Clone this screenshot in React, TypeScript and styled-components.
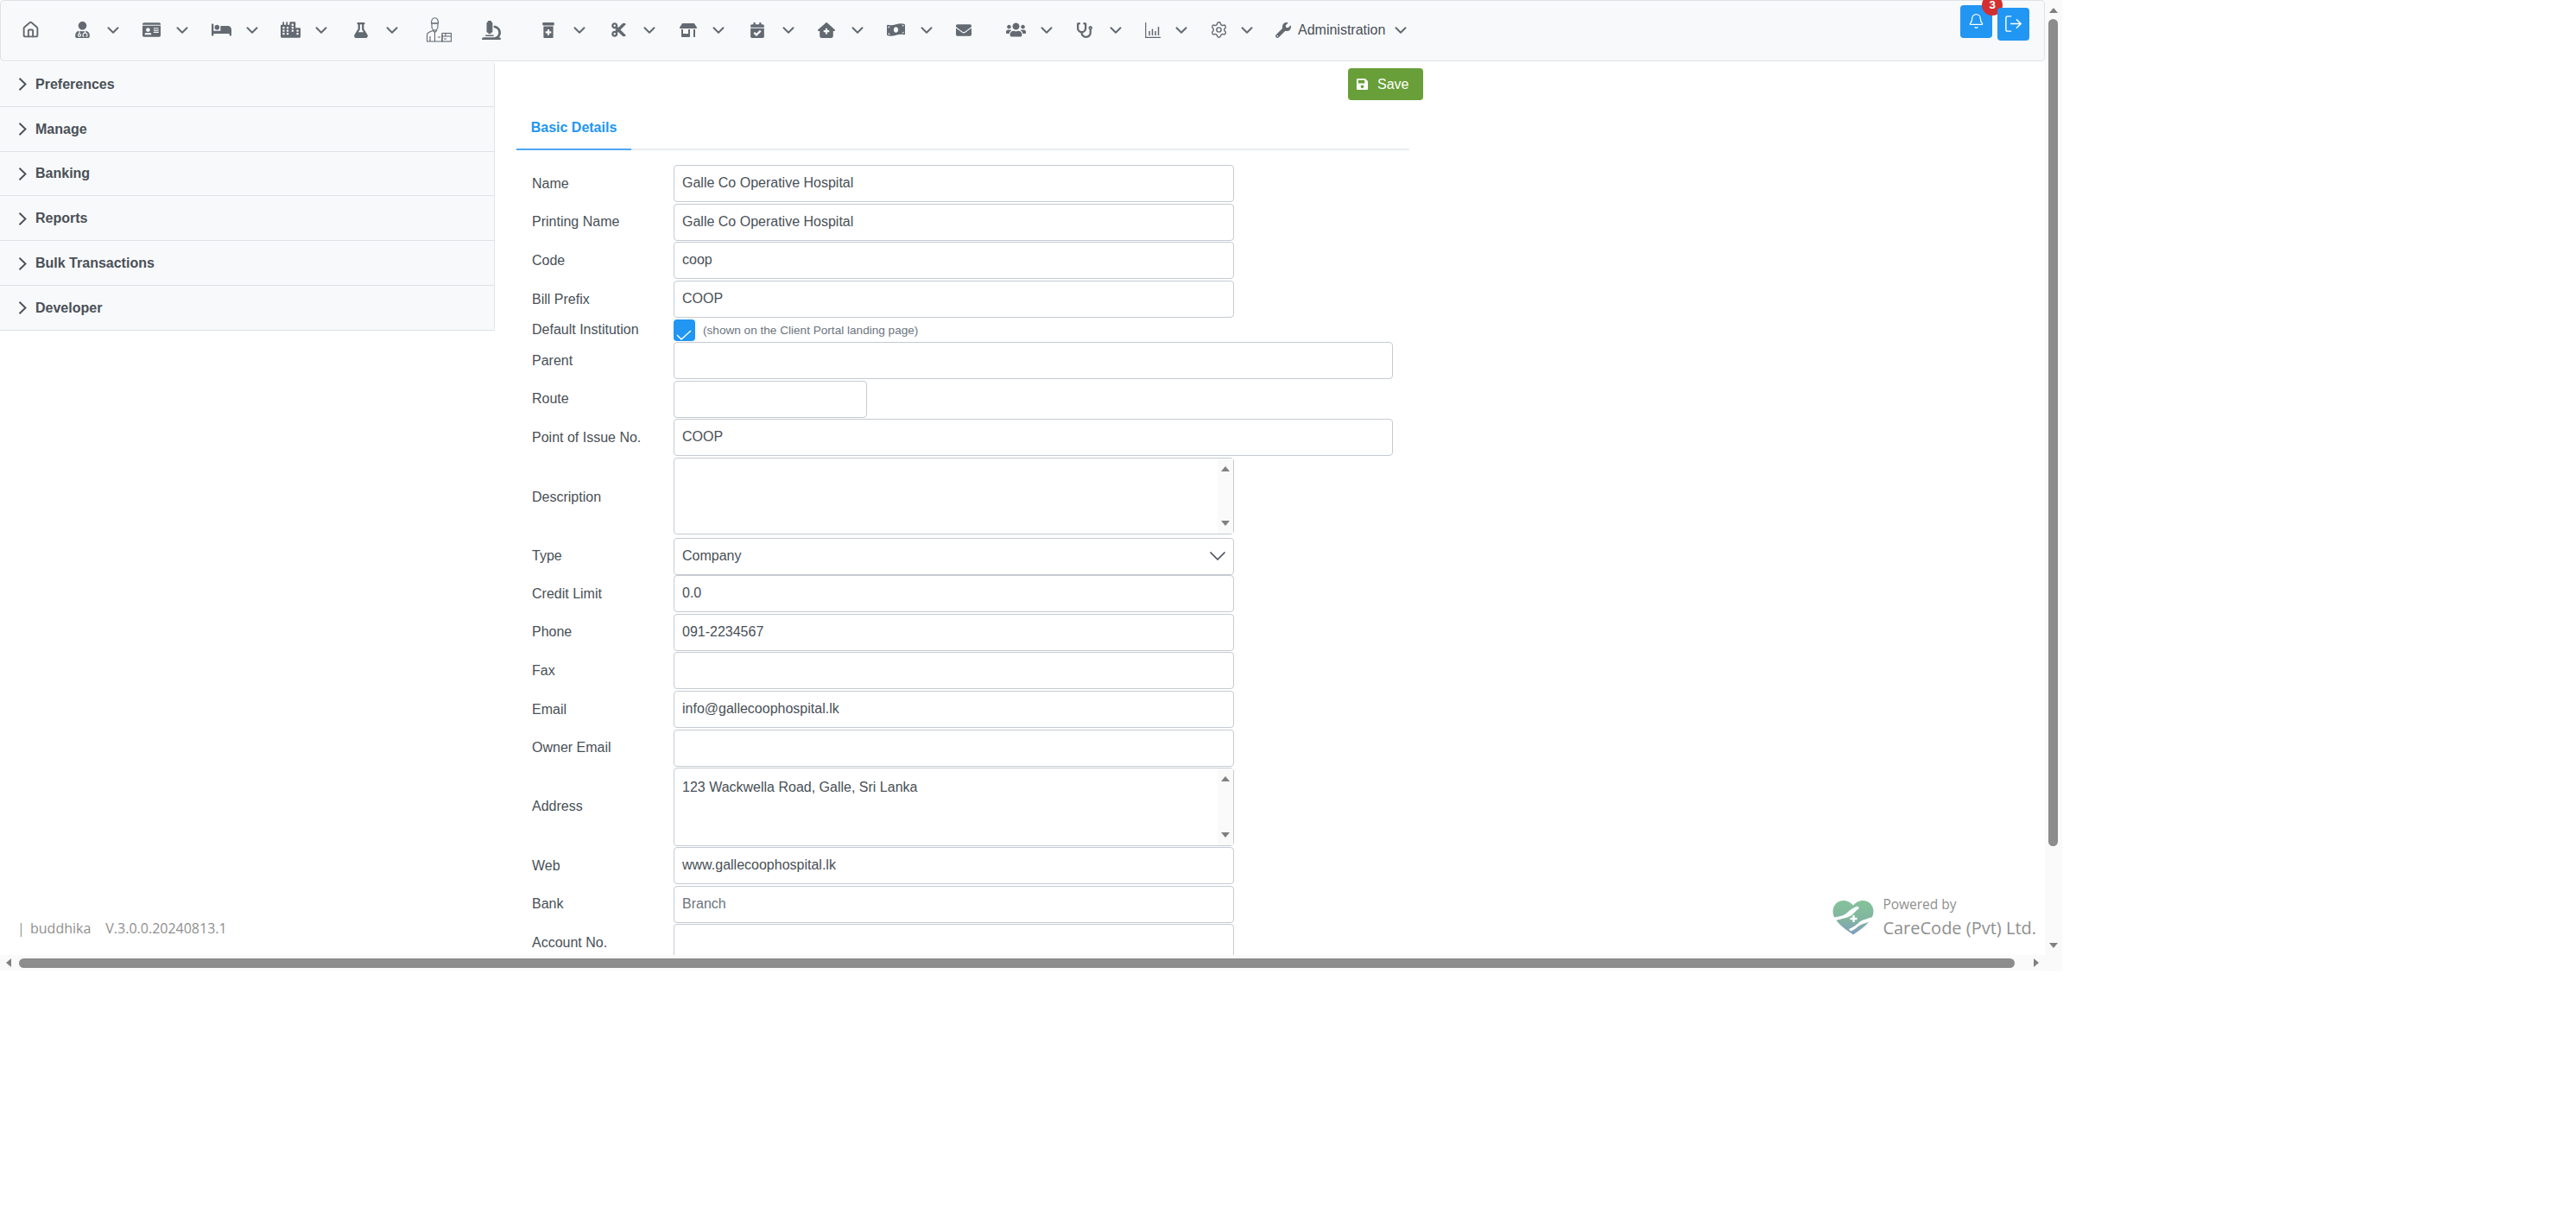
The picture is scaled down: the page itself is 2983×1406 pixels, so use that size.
import { FC, ReactNode } from "react";
import styled, { createGlobalStyle } from "styled-components";
import { ChevronDown, House, LogOut, Bell, Settings } from "lucide-react";
import {
  FaBed,
  FaCalendarCheck,
  FaCity,
  FaCut,
  FaEnvelope,
  FaFlask,
  FaIdCard,
  FaMicroscope,
  FaMoneyBillWave,
  FaPrescriptionBottleAlt,
  FaSave,
  FaStethoscope,
  FaStoreAlt,
  FaUserMd,
  FaUsers,
  FaWrench,
} from "react-icons/fa";
import { FaHouseMedical } from "react-icons/fa6";

const GlobalStyle = createGlobalStyle`
  html, body {
    margin: 0;
    padding: 0;
    background: #fff;
  }
  * {
    box-sizing: border-box;
  }
`;

const DeliveryIcon = () => (
  <svg width="29" height="29" viewBox="0 0 29 29" fill="none" stroke="#5f6770" strokeWidth="1.1">
    <path d="M5.5 7 C5.5 2.5 7 0.8 9.5 0.8 C12 0.8 13.5 2.5 13.5 7 Z" />
    <path d="M5 7 H14 M6 8 V10.5 C6 13 7.5 15 9.5 15 C11.5 15 13 13 13 10.5 V8" />
    <path d="M7 15 L9.5 17.5 L12 15 M9.5 17.5 V28" />
    <path d="M7 15.5 L2.5 17.5 C1 18.2 0.5 19.5 0.5 21 V28 H18 V20" />
    <path d="M4 22 V28 M13 23 H16" />
    <rect x="18" y="18.5" width="10.5" height="9.5" />
    <path d="M18 22 H28.5 M22 18.5 V22 M20 25 H23" />
  </svg>
);

const ChartIcon = () => (
  <svg width="18" height="18" viewBox="0 0 18 18" fill="none" stroke="#5f6770">
    <path d="M0.7 0 V17.3 H18" strokeWidth="1.2" />
    <path d="M5 15 V10 M8.5 15 V7.5 M12 15 V10 M15.5 15 V5" strokeWidth="1.5" />
  </svg>
);

const PanelChevron = () => (
  <svg width="10" height="15" viewBox="0 0 10 15" fill="none" stroke="#495057" strokeWidth="1.9">
    <path d="M1.5 0.8 L8.5 7.5 L1.5 14.2" />
  </svg>
);

const CheckMark = () => (
  <svg width="19" height="12" viewBox="0 0 19 12" fill="none" stroke="#fff" strokeWidth="1.4">
    <path d="M1 6 L6 11 L17 1" />
  </svg>
);

const CareCodeLogo = () => (
  <svg width="48" height="41" viewBox="0 0 48 41">
    <defs>
      <linearGradient id="heart" x1="0" y1="0" x2="0" y2="1">
        <stop offset="0" stopColor="#84c39a" />
        <stop offset="0.55" stopColor="#82b5a0" />
        <stop offset="1" stopColor="#7f9cc2" />
      </linearGradient>
    </defs>
    <path
      d="M24 40.5 C18 36 6 29 2 20 C-2.5 10 4 1 12.5 1 C18 1 21.5 3.5 24 6.5 C26.5 3.5 30 1 35.5 1 C44 1 50.5 10 46 20 C42 29 30 36 24 40.5 Z"
      fill="url(#heart)"
    />
    <path d="M1 21 C8 19 13 19 17 15 C20 12 24 9 29 7.5 L31 10 C27 12 26 15 22 18 C18 21 10 22 4 24 Z" fill="#fff" />
    <path d="M47 20 C40 22 35 23 31 26 C28 29 24 32 19 34 L21 36.5 C26 35 29 31 33 29 C37 27 42 26 45 25 Z" fill="#fff" />
    <path d="M24.5 18 V26 M20.5 22 H28.5" stroke="#fff" strokeWidth="2.4" />
  </svg>
);

interface MenuEntry {
  icon: ReactNode;
  width: number;
  chevron?: boolean;
  gap?: number;
}

const menuEntries: MenuEntry[] = [
  { icon: <House size={21} strokeWidth={2.2} />, width: 60.5 },
  { icon: <FaUserMd size={19} />, width: 80, chevron: true },
  { icon: <FaIdCard size={21} />, width: 81, chevron: true },
  { icon: <FaBed size={23} />, width: 80, chevron: true },
  { icon: <FaCity size={23} />, width: 81.5, chevron: true },
  { icon: <FaFlask size={18} />, width: 90.5, chevron: true },
  { icon: <DeliveryIcon />, width: 60.5 },
  { icon: <FaMicroscope size={22} />, width: 66 },
  { icon: <FaPrescriptionBottleAlt size={18} />, width: 81, chevron: true },
  { icon: <FaCut size={19} />, width: 80.5, chevron: true },
  { icon: <FaStoreAlt size={20} />, width: 80.5, chevron: true },
  { icon: <FaCalendarCheck size={18} />, width: 80, chevron: true },
  { icon: <FaHouseMedical size={20} />, width: 80.5, chevron: true },
  { icon: <FaMoneyBillWave size={21} />, width: 78.5, chevron: true },
  { icon: <FaEnvelope size={18} />, width: 60 },
  { icon: <FaUsers size={23} />, width: 80, chevron: true },
  { icon: <FaStethoscope size={18} />, width: 79, chevron: true },
  { icon: <ChartIcon />, width: 76, chevron: true, gap: 1.5 },
  { icon: <Settings size={21} strokeWidth={1.6} />, width: 86, chevron: true, gap: 1.5 },
];

const panels = ["Preferences", "Manage", "Banking", "Reports", "Bulk Transactions", "Developer"];

type FieldKind = "input" | "check" | "area" | "select";

interface Field {
  label: string;
  rowHeight: number;
  kind?: FieldKind;
  value?: string;
  placeholder?: string;
  size?: "full" | "wide" | "short";
  boxHeight?: number;
}

const fields: Field[] = [
  { label: "Name", rowHeight: 45, value: "Galle Co Operative Hospital" },
  { label: "Printing Name", rowHeight: 44, value: "Galle Co Operative Hospital" },
  { label: "Code", rowHeight: 45, value: "coop" },
  { label: "Bill Prefix", rowHeight: 45, value: "COOP" },
  { label: "Default Institution", rowHeight: 26, kind: "check" },
  { label: "Parent", rowHeight: 45, size: "wide" },
  { label: "Route", rowHeight: 44, size: "short" },
  { label: "Point of Issue No.", rowHeight: 45, size: "wide", value: "COOP" },
  { label: "Description", rowHeight: 93, kind: "area", boxHeight: 89 },
  { label: "Type", rowHeight: 43, kind: "select", value: "Company" },
  { label: "Credit Limit", rowHeight: 45, value: "0.0" },
  { label: "Phone", rowHeight: 44, value: "091-2234567" },
  { label: "Fax", rowHeight: 45 },
  { label: "Email", rowHeight: 45, value: "info@gallecoophospital.lk" },
  { label: "Owner Email", rowHeight: 44 },
  { label: "Address", rowHeight: 92, kind: "area", boxHeight: 91, value: "123 Wackwella Road, Galle, Sri Lanka" },
  { label: "Web", rowHeight: 45, value: "www.gallecoophospital.lk" },
  { label: "Bank", rowHeight: 44, placeholder: "Branch" },
  { label: "Account No.", rowHeight: 45 },
];

const renderControl = (field: Field) => {
  if (field.kind === "check") {
    return (
      <CheckWrap>
        <CheckBox>
          <CheckMark />
        </CheckBox>
        <Note>(shown on the Client Portal landing page)</Note>
      </CheckWrap>
    );
  }
  if (field.kind === "area") {
    return (
      <AreaWrap $height={field.boxHeight ?? 89}>
        <TextArea readOnly value={field.value ?? ""} />
        <AreaScroll>
          <ArrowUp $w={5} $h={6} />
          <ArrowDown $w={5} $h={6} />
        </AreaScroll>
      </AreaWrap>
    );
  }
  if (field.kind === "select") {
    return (
      <SelectBox>
        {field.value}
        <ChevronDown size={32} strokeWidth={1.3} color="#495057" />
      </SelectBox>
    );
  }
  return <TextInput readOnly $size={field.size ?? "full"} value={field.value ?? ""} placeholder={field.placeholder} />;
};

const App: FC = () => {
  return (
    <>
      <GlobalStyle />
      <Page>
        <Main>
          <Viewport>
            <MenuBar>
              {menuEntries.map((entry, idx) => (
                <MenuItem key={idx} $width={entry.width}>
                  <IconSlot>{entry.icon}</IconSlot>
                  {entry.chevron && (
                    <MenuChevron $gap={entry.gap ?? 4.5}>
                      <ChevronDown size={22} strokeWidth={2.2} />
                    </MenuChevron>
                  )}
                </MenuItem>
              ))}
              <AdminItem>
                <FaWrench size={18} />
                <AdminLabel>Administration</AdminLabel>
                <MenuChevron $gap={6.5}>
                  <ChevronDown size={22} strokeWidth={2.2} />
                </MenuChevron>
              </AdminItem>
              <TopActions>
                <BellButton>
                  <Bell size={19} strokeWidth={1.6} />
                  <Badge>3</Badge>
                </BellButton>
                <LogoutButton>
                  <LogOut size={23} strokeWidth={1.5} />
                </LogoutButton>
              </TopActions>
            </MenuBar>
            <Body>
              <Sidebar>
                {panels.map((panel) => (
                  <Panel key={panel}>
                    <PanelChevron />
                    {panel}
                  </Panel>
                ))}
              </Sidebar>
              <Content>
                <Toolbar>
                  <SaveButton>
                    <FaSave size={15} />
                    Save
                  </SaveButton>
                </Toolbar>
                <TabBar>
                  <Tab>Basic Details</Tab>
                </TabBar>
                <Form>
                  {fields.map((field) => (
                    <Row key={field.label} $height={field.rowHeight}>
                      <Label>{field.label}</Label>
                      {renderControl(field)}
                    </Row>
                  ))}
                </Form>
              </Content>
            </Body>
            <Footer>
              <UserInfo>
                <Pipe>|</Pipe>
                <span>buddhika</span>
                <Version>V.3.0.0.20240813.1</Version>
              </UserInfo>
              <Brand>
                <CareCodeLogo />
                <BrandText>
                  <PoweredBy>Powered by</PoweredBy>
                  <BrandName>CareCode (Pvt) Ltd.</BrandName>
                </BrandText>
              </Brand>
            </Footer>
          </Viewport>
          <HScroll>
            <ArrowLeft />
            <HThumb />
            <ArrowRight />
          </HScroll>
        </Main>
        <VScroll>
          <ArrowUp $w={5.5} $h={6} />
          <VThumb />
          <ArrowDown $w={5.5} $h={6} />
        </VScroll>
      </Page>
    </>
  );
};

const Page = styled.div`
  display: flex;
  width: 2388px;
  height: 1125px;
  font-family: "Liberation Sans", Arial, sans-serif;
  font-size: 16px;
  color: #495057;
`;

const Main = styled.div`
  display: flex;
  flex-direction: column;
  width: 2368px;
  height: 1124px;
`;

const Viewport = styled.div`
  position: relative;
  height: 1106px;
  overflow: hidden;
`;

const MenuBar = styled.nav`
  display: flex;
  align-items: flex-start;
  height: 71px;
  padding-left: 14px;
  background: #f8f9fa;
  border: 1.5px solid #dee2e6;
  border-radius: 4px;
  color: #636a72;
`;

const MenuItem = styled.div<{ $width: number }>`
  display: flex;
  align-items: center;
  flex: none;
  width: ${(props) => props.$width}px;
  height: 67px;
`;

const IconSlot = styled.div`
  display: flex;
  align-items: center;
  justify-content: center;
  flex: none;
  width: 40px;
  height: 30px;
`;

const MenuChevron = styled.span<{ $gap: number }>`
  display: flex;
  flex: none;
  margin-left: ${(props) => props.$gap}px;
  color: #636a72;
`;

const AdminItem = styled.div`
  display: flex;
  align-items: center;
  flex: none;
  height: 67px;
`;

const AdminLabel = styled.span`
  margin-left: 8px;
  color: #495057;
`;

const TopActions = styled.div`
  display: flex;
  align-items: flex-start;
  gap: 6px;
  margin-left: auto;
  margin-right: 17px;
`;

const BellButton = styled.button`
  position: relative;
  display: flex;
  align-items: center;
  justify-content: center;
  width: 37px;
  height: 38px;
  margin-top: 4.5px;
  padding: 0;
  border: none;
  border-radius: 4px;
  background: #2196f3;
  color: #fff;
`;

const LogoutButton = styled(BellButton)`
  margin-top: 7.5px;
`;

const Badge = styled.span`
  position: absolute;
  top: -12px;
  right: -12px;
  display: flex;
  align-items: flex-end;
  justify-content: center;
  width: 24px;
  height: 24px;
  padding-bottom: 6px;
  border-radius: 50%;
  background: #d32f2f;
  color: #fff;
  font-family: "Inter", sans-serif;
  font-size: 12px;
  font-weight: 700;
  line-height: 12px;
`;

const Body = styled.div`
  display: flex;
  align-items: flex-start;
`;

const Sidebar = styled.aside`
  flex: none;
  width: 573px;
  margin-top: 1px;
  background: #f8f9fa;
  border-right: 1.5px solid #e4e7ea;
  border-radius: 0 3px 0 0;
`;

const Panel = styled.div`
  display: flex;
  align-items: center;
  gap: 10px;
  height: 51.8px;
  padding: 1px 0 0 21px;
  border-bottom: 1.5px solid #dee2e6;
  font-weight: 700;
`;

const Content = styled.main`
  flex: none;
  width: 1075px;
  padding-top: 8px;
`;

const Toolbar = styled.div`
  display: flex;
  justify-content: flex-end;
`;

const SaveButton = styled.button`
  display: flex;
  align-items: center;
  gap: 10px;
  width: 87px;
  height: 37px;
  padding: 0 0 0 9px;
  border: none;
  border-radius: 4px;
  background: #689f38;
  color: #fff;
  font-family: inherit;
  font-size: 16px;
`;

const TabBar = styled.div`
  display: flex;
  height: 52px;
  margin: 6px 16px 0 25px;
  border-bottom: 2px solid #e9ecef;
`;

const Tab = styled.div`
  display: flex;
  align-items: center;
  justify-content: center;
  width: 133px;
  height: 52px;
  padding-top: 2px;
  border-bottom: 2px solid #4fa8f5;
  color: #2196f3;
  font-weight: 700;
`;

const Form = styled.div`
  margin-top: 17px;
  padding-left: 43px;
`;

const Row = styled.div<{ $height: number }>`
  display: flex;
  align-items: flex-start;
  height: ${(props) => props.$height}px;
`;

const Label = styled.label`
  flex: none;
  align-self: center;
  width: 164px;
  margin-top: -2px;
`;

const controlWidths = { full: 649, wide: 833, short: 224 };

const TextInput = styled.input<{ $size: "full" | "wide" | "short" }>`
  width: ${(props) => controlWidths[props.$size]}px;
  height: 43px;
  padding: 0 9px 1px;
  border: 1.5px solid #c5cbd2;
  border-radius: 4px;
  outline: none;
  color: #495057;
  font-family: inherit;
  font-size: 16px;

  &::placeholder {
    color: #6c757d;
    opacity: 1;
  }
`;

const SelectBox = styled.div`
  display: flex;
  align-items: center;
  justify-content: space-between;
  width: 649px;
  height: 43px;
  padding: 0 2px 1px 9px;
  border: 1.5px solid #c5cbd2;
  border-radius: 4px;
`;

const CheckWrap = styled.div`
  display: flex;
  align-items: center;
  gap: 9px;
`;

const CheckBox = styled.div`
  display: flex;
  align-items: flex-end;
  justify-content: center;
  width: 25px;
  height: 25px;
  padding-bottom: 1px;
  border-radius: 4px;
  background: #2196f3;
`;

const Note = styled.span`
  color: #6c757d;
  font-size: 13.6px;
`;

const AreaWrap = styled.div<{ $height: number }>`
  position: relative;
  width: 649px;
  height: ${(props) => props.$height}px;
`;

const TextArea = styled.textarea`
  display: block;
  width: 100%;
  height: 100%;
  padding: 12px 25px 0 9px;
  border: 1.5px solid #c5cbd2;
  border-radius: 4px;
  outline: none;
  resize: none;
  overflow: hidden;
  color: #495057;
  font-family: inherit;
  font-size: 16px;
  line-height: 19px;
`;

const AreaScroll = styled.div`
  position: absolute;
  top: 1px;
  right: 1px;
  bottom: 1px;
  display: flex;
  flex-direction: column;
  align-items: center;
  justify-content: space-between;
  width: 18px;
  padding: 9px 0;
  background: #fafafa;
`;

const ArrowUp = styled.span<{ $w: number; $h: number }>`
  flex: none;
  width: 0;
  height: 0;
  border-left: ${(props) => props.$w}px solid transparent;
  border-right: ${(props) => props.$w}px solid transparent;
  border-bottom: ${(props) => props.$h}px solid #808080;
`;

const ArrowDown = styled.span<{ $w: number; $h: number }>`
  flex: none;
  width: 0;
  height: 0;
  border-left: ${(props) => props.$w}px solid transparent;
  border-right: ${(props) => props.$w}px solid transparent;
  border-top: ${(props) => props.$h}px solid #808080;
`;

const Footer = styled.footer`
  position: absolute;
  left: 0;
  right: 0;
  bottom: 16px;
  display: flex;
  align-items: flex-end;
  justify-content: space-between;
  padding: 0 10px 0 20px;
  font-family: "Open Sans", sans-serif;
  color: #8f8f8f;
`;

const UserInfo = styled.div`
  display: flex;
  font-size: 16px;
  line-height: 20px;
  margin-bottom: 5px;
`;

const Pipe = styled.span`
  width: 15px;
`;

const Version = styled.span`
  margin-left: 17px;
`;

const Brand = styled.div`
  display: flex;
  align-items: center;
  gap: 10px;
`;

const BrandText = styled.div`
  display: flex;
  flex-direction: column;
`;

const PoweredBy = styled.span`
  font-size: 15.5px;
  line-height: 26px;
`;

const BrandName = styled.span`
  font-size: 20px;
  line-height: 30px;
`;

const HScroll = styled.div`
  display: flex;
  align-items: center;
  height: 18px;
  padding-left: 7px;
  background: #fafafa;
`;

const ArrowLeft = styled.span`
  flex: none;
  width: 0;
  height: 0;
  border-top: 5.5px solid transparent;
  border-bottom: 5.5px solid transparent;
  border-right: 6px solid #808080;
`;

const ArrowRight = styled.span`
  flex: none;
  width: 0;
  height: 0;
  margin-left: 22px;
  border-top: 5.5px solid transparent;
  border-bottom: 5.5px solid transparent;
  border-left: 6px solid #808080;
`;

const HThumb = styled.div`
  flex: none;
  width: 2311px;
  height: 11px;
  margin-left: 9px;
  border-radius: 6px;
  background: #8c8c8c;
`;

const VScroll = styled.div`
  display: flex;
  flex-direction: column;
  align-items: center;
  width: 20px;
  height: 1125px;
  padding: 9px 1px 27px 0;
  background: #fafafa;
`;

const VThumb = styled.div`
  flex: none;
  width: 11px;
  height: 958px;
  margin: 7px 0 auto;
  border-radius: 6px;
  background: #8c8c8c;
`;

export default App;
